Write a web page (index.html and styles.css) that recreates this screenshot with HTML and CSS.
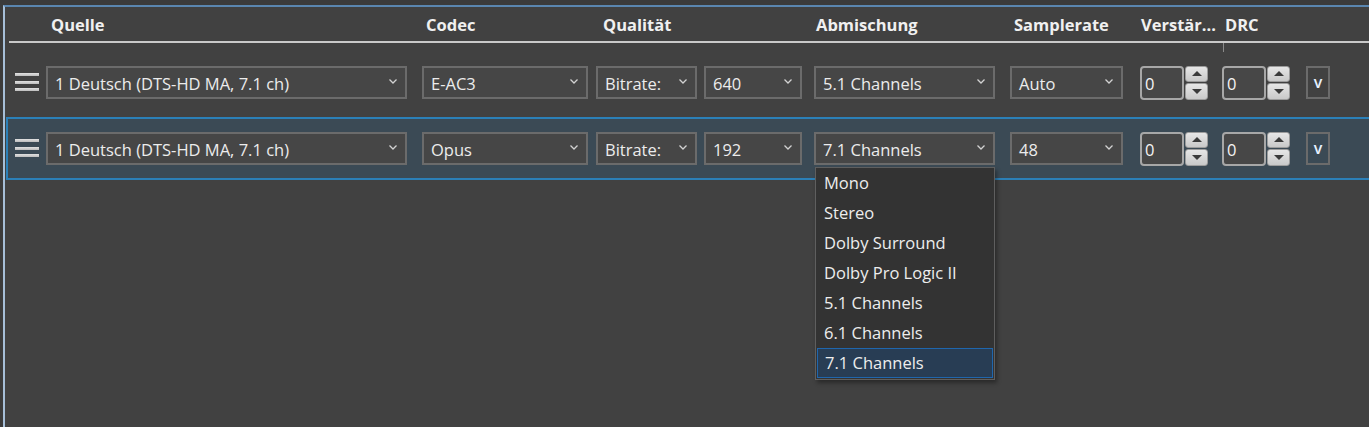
FILE: index.html
```html
<!DOCTYPE html>
<html lang="de">
<head>
<meta charset="utf-8">
<title>Audio-Spuren</title>
<link rel="stylesheet" href="styles.css">
</head>
<body>
<div class="panel">
  <div class="header">
    <div class="h h-src">Quelle</div>
    <div class="h h-codec">Codec</div>
    <div class="h h-qual">Qualität</div>
    <div class="h h-mix">Abmischung</div>
    <div class="h h-rate">Samplerate</div>
    <div class="h h-gain">Verstär...</div>
    <div class="h h-drc">DRC</div>
    <span class="h-tick"></span>
  </div>

  <div class="track">
    <div class="grip"><span></span><span></span><span></span></div>
    <div class="combo c-src"><span class="val">1 Deutsch (DTS-HD MA, 7.1 ch)</span><svg class="chev" viewBox="0 0 8 5"><path d="M0.5 0.5 L4 4 L7.5 0.5"/></svg></div>
    <div class="combo c-codec"><span class="val">E-AC3</span><svg class="chev" viewBox="0 0 8 5"><path d="M0.5 0.5 L4 4 L7.5 0.5"/></svg></div>
    <div class="combo c-mode"><span class="val">Bitrate:</span><svg class="chev" viewBox="0 0 8 5"><path d="M0.5 0.5 L4 4 L7.5 0.5"/></svg></div>
    <div class="combo c-val"><span class="val">640</span><svg class="chev" viewBox="0 0 8 5"><path d="M0.5 0.5 L4 4 L7.5 0.5"/></svg></div>
    <div class="combo c-mix"><span class="val">5.1 Channels</span><svg class="chev" viewBox="0 0 8 5"><path d="M0.5 0.5 L4 4 L7.5 0.5"/></svg></div>
    <div class="combo c-rate"><span class="val">Auto</span><svg class="chev" viewBox="0 0 8 5"><path d="M0.5 0.5 L4 4 L7.5 0.5"/></svg></div>
    <div class="spin"><div class="spin-box">0</div><div class="spin-btns"><span class="up"></span><span class="down"></span></div></div>
    <div class="spin"><div class="spin-box">0</div><div class="spin-btns"><span class="up"></span><span class="down"></span></div></div>
    <div class="more">v</div>
  </div>

  <div class="track selected">
    <div class="grip"><span></span><span></span><span></span></div>
    <div class="combo c-src"><span class="val">1 Deutsch (DTS-HD MA, 7.1 ch)</span><svg class="chev" viewBox="0 0 8 5"><path d="M0.5 0.5 L4 4 L7.5 0.5"/></svg></div>
    <div class="combo c-codec"><span class="val">Opus</span><svg class="chev" viewBox="0 0 8 5"><path d="M0.5 0.5 L4 4 L7.5 0.5"/></svg></div>
    <div class="combo c-mode"><span class="val">Bitrate:</span><svg class="chev" viewBox="0 0 8 5"><path d="M0.5 0.5 L4 4 L7.5 0.5"/></svg></div>
    <div class="combo c-val"><span class="val">192</span><svg class="chev" viewBox="0 0 8 5"><path d="M0.5 0.5 L4 4 L7.5 0.5"/></svg></div>
    <div class="combo c-mix open"><span class="val">7.1 Channels</span><svg class="chev" viewBox="0 0 8 5"><path d="M0.5 0.5 L4 4 L7.5 0.5"/></svg>
      <ul class="dropdown">
        <li>Mono</li>
        <li>Stereo</li>
        <li>Dolby Surround</li>
        <li>Dolby Pro Logic II</li>
        <li>5.1 Channels</li>
        <li>6.1 Channels</li>
        <li class="active">7.1 Channels</li>
      </ul>
    </div>
    <div class="combo c-rate"><span class="val">48</span><svg class="chev" viewBox="0 0 8 5"><path d="M0.5 0.5 L4 4 L7.5 0.5"/></svg></div>
    <div class="spin"><div class="spin-box">0</div><div class="spin-btns"><span class="up"></span><span class="down"></span></div></div>
    <div class="spin"><div class="spin-box">0</div><div class="spin-btns"><span class="up"></span><span class="down"></span></div></div>
    <div class="more">v</div>
  </div>
</div>
</body>
</html>
```

FILE: styles.css
```css
html, body {
  margin: 0;
  padding: 0;
  height: 100%;
  overflow: hidden;
}
body {
  background: #3b3b3b;
  font-family: "Open Sans", "Noto Sans", sans-serif;
  font-size: 16.5px;
  color: #ececec;
}
.panel {
  margin: 5px 0 0 3px;
  width: 1400px;
  height: 440px;
  box-sizing: border-box;
  background: #414141;
  border-top: 2px solid #5a86b0;
  border-left: 2px solid #a6bfd8;
  position: relative;
}

/* header */
.header {
  position: relative;
  margin-left: 4px;
  height: 34px;
  border-bottom: 2px solid #c9c9c9;
  display: grid;
  grid-template-columns: 31px 376px 174px 218px 196px 130px 82px 1fr;
  align-items: center;
  padding-left: 6px;
  box-sizing: content-box;
  margin-bottom: 8px;
}
.h {
  font-weight: 700;
  font-size: 16.5px;
  color: #f0f0f0;
  white-space: nowrap;
}
.h-src { grid-column: 2; padding-left: 5px; }
.h-codec { padding-left: 4px; }
.h-qual { padding-left: 7px; }
.h-mix { padding-left: 2px; }
.h-rate { padding-left: 4px; }
.h-gain { padding-left: 1px; }
.h-drc { padding-left: 3px; }
.h-tick {
  position: absolute;
  left: 1214px;
  top: 36px;
  width: 1px;
  height: 9px;
  background: #8a8a8a;
}

/* track rows */
.track {
  margin: 0 0 3px 1px;
  height: 63px;
  box-sizing: border-box;
  border: 2px solid transparent;
  border-right: none;
  display: grid;
  grid-template-columns: 31px 376px 174px 108px 110px 196px 130px 82px 84px 1fr;
  align-items: center;
  padding-left: 7px;
}
.track.selected {
  background: #3b4a55;
  border-color: #2b80b8;
}

.grip {
  width: 24px;
  display: flex;
  flex-direction: column;
  gap: 4.5px;
  margin-top: -1px;
}
.grip span {
  display: block;
  height: 3px;
  background: linear-gradient(#e2e2e2, #bdbdbd);
}

.combo {
  position: relative;
  height: 33px;
  box-sizing: border-box;
  border: 2px solid #6b6b6b;
  background: #464646;
  display: flex;
  align-items: center;
  justify-content: space-between;
  padding: 0 8px 0 7px;
  white-space: nowrap;
}
.val { padding-top: 2px; }
.chev {
  width: 8px;
  height: 5px;
  margin-top: -3px;
  fill: none;
  stroke: #d2d2d2;
  stroke-width: 1.3;
}
.c-src { width: 361px; }
.c-codec { width: 166px; }
.c-mode { width: 101px; }
.c-val { width: 98px; }
.c-mix { width: 181px; }
.c-rate { width: 113px; }

/* spinners */
.spin {
  display: flex;
  align-items: stretch;
  height: 34px;
  gap: 1px;
}
.spin-box {
  width: 44px;
  box-sizing: border-box;
  border: 2px solid #a7a7a7;
  border-radius: 4px;
  background: #474747;
  padding: 2px 0 0 3px;
  display: flex;
  align-items: center;
  color: #f4f4f4;
}
.spin-btns {
  width: 23px;
  display: flex;
  flex-direction: column;
  gap: 1px;
}
.spin-btns span {
  flex: 1;
  position: relative;
  border: 1px solid #9c9c9c;
  border-radius: 3px;
  background: linear-gradient(#e6e6e6, #c9c9c9);
}
.spin-btns .up::after,
.spin-btns .down::after {
  content: "";
  position: absolute;
  left: 50%;
  top: 50%;
  margin-left: -5px;
  border-left: 5px solid transparent;
  border-right: 5px solid transparent;
}
.spin-btns .up::after {
  margin-top: -3px;
  border-bottom: 5px solid #3a3a3a;
}
.spin-btns .down::after {
  margin-top: -2px;
  border-top: 5px solid #3a3a3a;
}

.more {
  width: 24px;
  height: 33px;
  box-sizing: border-box;
  border: 2px solid #6b6b6b;
  display: flex;
  align-items: center;
  justify-content: center;
  font-weight: 600;
  font-size: 16px;
  color: #e6f0ff;
  padding-bottom: 2px;
}

/* open dropdown */
.dropdown {
  position: absolute;
  left: -1px;
  top: 33px;
  width: 178px;
  margin: 0;
  padding: 0;
  list-style: none;
  background: #333333;
  border: 1px solid #5f5f5f;
  box-shadow: 2px 3px 4px rgba(0, 0, 0, 0.35);
  z-index: 5;
}
.dropdown li {
  height: 30px;
  line-height: 29px;
  padding-left: 8px;
  box-sizing: border-box;
  color: #ededed;
}
.dropdown li.active {
  margin: 0 1px 1px 1px;
  padding-left: 7px;
  background: #283d54;
  border: 1px solid #1f66ad;
  line-height: 27px;
}
```
